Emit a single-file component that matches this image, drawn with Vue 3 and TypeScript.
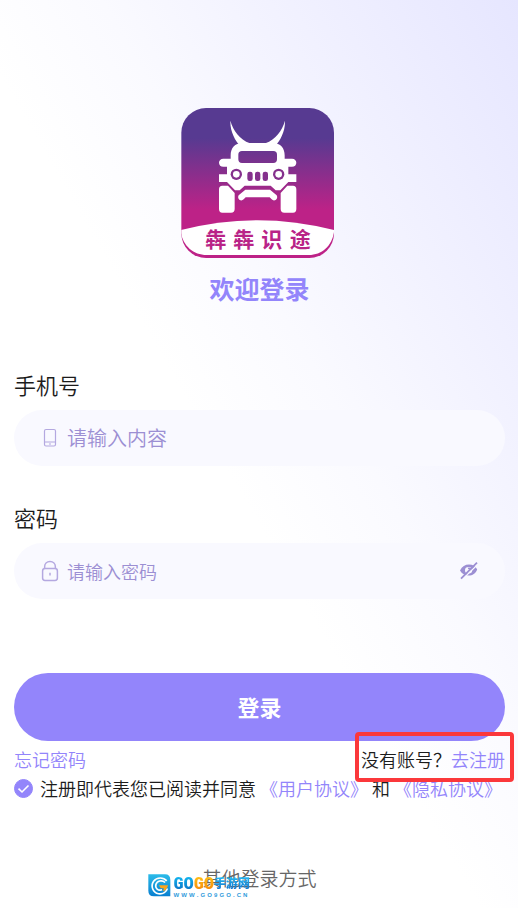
<script setup lang="ts">
import { ref } from 'vue'

const phone = ref('')
const password = ref('')
const showPassword = ref(false)
const agreed = ref(true)
</script>

<template>
  <main class="page">
    <svg class="logo" viewBox="33 30 471 450" role="img" aria-label="犇犇识途">
      <defs>
        <linearGradient id="logo-fill" x1="0" y1="0" x2="0" y2="1">
          <stop offset="0.2" stop-color="#573a91" />
          <stop offset="0.68" stop-color="#bd2287" />
        </linearGradient>
        <clipPath id="logo-shape"><rect x="34" y="30" width="458" height="450" rx="74" /></clipPath>
      </defs>
      <g clip-path="url(#logo-shape)">
        <rect x="33" y="30" width="459" height="450" fill="url(#logo-fill)" />
        <path d="M33 396Q262 337 492 396V402C486 444 455 471 416 471H110C70 471 40 444 33 405Z" fill="#fff" />
      </g>
      <g fill="#fff">
        <path d="M181 68C190 98 208 124 240 136H286C318 124 336 98 345 68C346 100 331 128 314 145H212C195 128 180 100 181 68Z" />
        <path fill-rule="evenodd" d="M217 135H309C332 135 344 151 344 172V182H366C374 182 379 188 379 194C379 201 374 206 366 206H355V229H379V252H355L331 277H317L302 263H224L209 277H195L171 252H147V229H171V206H160C152 206 147 201 147 194C147 188 152 182 160 182H182V172C182 151 194 135 217 135ZM216 159Q205 159 205 170V184Q205 195 216 195H310Q321 195 321 184V170Q321 159 310 159Z" />
        <path d="M157 263H174L194 285V333Q194 344 183 344H157Q147 344 147 333V274Q147 263 157 263ZM369 263H352L332 285V333Q332 344 343 344H369Q379 344 379 333V274Q379 263 369 263Z" />
        <path d="M226 275H300L320 292Q324 299 318 305Q311 310 305 304L299 298H227L221 304Q215 310 208 305Q202 299 206 292Z" />
      </g>
      <g fill="#85308d">
        <circle cx="199" cy="229" r="17" />
        <circle cx="326" cy="229" r="17" />
        <rect x="232" y="221" width="16" height="28" rx="7" />
        <rect x="255" y="221" width="16" height="28" rx="7" />
        <rect x="278" y="221" width="16" height="28" rx="7" />
      </g>
      <g fill="#fff">
        <circle cx="199" cy="229" r="10" />
        <circle cx="326" cy="229" r="10" />
      </g>
      <text class="logo-name" x="106 190 274 359" y="447">犇犇识途</text>
    </svg>

    <h1 class="title">欢迎登录</h1>

    <form class="form" @submit.prevent>
      <div class="field">
        <label class="label" for="phone">手机号</label>
        <div class="control">
          <svg class="icon" viewBox="0 0 20 22" aria-hidden="true">
            <rect x="4.5" y="2.5" width="11" height="16.5" rx="1.5" />
            <path d="M4.5 15H15.5M9 17H11" />
          </svg>
          <input id="phone" v-model="phone" class="input input-large" type="tel" placeholder="请输入内容" />
        </div>
      </div>

      <div class="field">
        <label class="label" for="password">密码</label>
        <div class="control">
          <svg class="icon icon-lock" viewBox="0 0 20 22" aria-hidden="true">
            <rect x="2.6" y="8.6" width="14.8" height="11.8" rx="2.4" />
            <path d="M4.6 8.6V7C4.6 3.8 6.8 1.6 10 1.6S15.4 3.8 15.4 7V8.6M10 12.8V15.6" />
          </svg>
          <input
            id="password"
            v-model="password"
            class="input"
            :type="showPassword ? 'text' : 'password'"
            placeholder="请输入密码"
          />
          <button class="toggle" type="button" aria-label="显示密码" @click="showPassword = !showPassword">
            <svg viewBox="0 0 20 20" aria-hidden="true">
              <path fill-rule="evenodd" d="M1 9.5C3 5.5 6.2 3.6 10 3.6S16.6 5.3 18.2 8.5C16.5 12.7 13.5 14.6 9.8 14.6S2.8 13 1 9.5ZM9.6 6A3.6 3.2 0 1 0 9.6 12.4A3.6 3.2 0 1 0 9.6 6Z" fill="#9c8fd3" />
              <path d="M9 7.5C11 6.800 12.300 8 12.200 9.5" fill="none" stroke="#9c8fd3" stroke-width="1.5" />
              <path d="M3.600 18L19.200 3" stroke="#f9f9ff" stroke-width="1.2" />
              <path d="M2 17.600L18 1.600" stroke="#9c8fd3" stroke-width="1.7" />
            </svg>
          </button>
        </div>
      </div>

      <button class="submit" type="submit">登录</button>

      <div class="links">
        <a href="#forgot">忘记密码</a>
        <p class="signup">没有账号？<a href="#register">去注册</a></p>
      </div>

      <div class="terms">
        <label class="agree">
          <span class="check">
            <input v-model="agreed" type="checkbox" />
            <svg v-if="agreed" viewBox="0 0 19 19" aria-hidden="true"><path d="M4.5 9.7L8 13L14.5 6.5" /></svg>
          </span>
          <span>注册即代表您已阅读并同意</span>
        </label>
        <a href="#agreement">《用户协议》</a>
        <span>和</span>
        <a href="#privacy">《隐私协议》</a>
      </div>
    </form>

    <footer class="other">
      <span class="other-text">
        其他登录方式
        <span class="mark">
          <svg class="mark-icon" viewBox="0 0 70 70" aria-hidden="true">
            <defs>
              <linearGradient id="mark-fill" x1="0" y1="0" x2="0" y2="1">
                <stop offset="0" stop-color="#2bbbe9" />
                <stop offset="1" stop-color="#087fd0" />
              </linearGradient>
            </defs>
            <path d="M1 1H52Q68 1 68 18V68H18Q1 68 1 51Z" fill="url(#mark-fill)" />
            <path d="M57 21C47 9 27 9 17 22C7 37 15 57 32 60C46 62 56 54 59 44" fill="none" stroke="#fff" stroke-width="5" />
            <path d="M52 26C43 17 27 20 24 32C21 44 31 52 43 48" fill="none" stroke="#fff" stroke-width="5" />
            <path d="M33 34H61C59 43 54 50 46 53L48 43H39Z" fill="#f9a51b" />
          </svg>
          <span class="mark-body">
            <span class="mark-name"><b class="mark-blue">GO</b><b class="mark-orange">GO</b><b class="mark-cn">手游网</b></span>
            <span class="mark-url"><i v-for="(c, i) in 'WWW.GO9GO.CN'" :key="i">{{ c }}</i></span>
          </span>
        </span>
      </span>
    </footer>
  </main>
</template>

<style>
body {
  margin: 0;
}
</style>

<style scoped>
.page {
  box-sizing: border-box;
  min-height: 100vh;
  padding: 108px 13px 15px 14px;
  display: flex;
  flex-direction: column;
  background: linear-gradient(240deg, #e6e6ff 0%, #f2f2ff 24%, #fafaff 40%, #ffffff 54%);
  color: #1c1c1c;
  font-family: "Noto Sans CJK SC", sans-serif;
  font-size: 18px;
  font-weight: 350;
  line-height: 20px;
}

.logo {
  width: 157px;
  height: 150px;
  align-self: center;
}

.logo-name {
  fill: #b92387;
  font-size: 63px;
  font-weight: 700;
}

.title {
  margin: 14px 0 66px;
  color: #9385fb;
  font-size: 25px;
  font-weight: 700;
  line-height: 32px;
  text-align: center;
}

.form {
  display: flex;
  flex-direction: column;
}

.field {
  display: flex;
  flex-direction: column;
  gap: 12px;
}

.field + .field {
  margin-top: 37px;
}

.label {
  font-size: 22px;
  line-height: 28px;
}

.control {
  display: flex;
  align-items: center;
  gap: 7px;
  height: 56px;
  padding: 0 26px;
  border-radius: 28px;
  background: #f9f9ff;
}

.icon {
  flex: none;
  width: 20px;
  height: 22px;
  fill: none;
  stroke: #b4a8e0;
  stroke-width: 1.2;
}

.icon-lock {
  stroke-width: 1.5;
}

.input {
  flex: 1;
  min-width: 0;
  padding: 0;
  border: 0;
  outline: 0;
  background: transparent;
  color: #1c1c1c;
  font-family: inherit;
  font-size: 18px;
  font-weight: inherit;
  line-height: 30px;
}

.input-large {
  font-size: 20px;
}

.input::placeholder {
  color: #9c8fd3;
  opacity: 1;
}

.toggle {
  flex: none;
  width: 20px;
  height: 20px;
  padding: 0;
  border: 0;
  background: transparent;
}

.toggle svg {
  display: block;
}

.submit {
  height: 68px;
  margin-top: 74px;
  padding: 0 0 2px;
  border: 0;
  border-radius: 34px;
  background: #9385fb;
  color: #fff;
  font-family: inherit;
  font-size: 22px;
  font-weight: 700;
}

a {
  color: #9385fb;
  text-decoration: none;
}

.links {
  display: flex;
  justify-content: space-between;
  line-height: 37px;
}

.signup {
  position: relative;
  margin: 0;
}

.signup::after {
  content: "";
  position: absolute;
  inset: -9px -9px -4px -6px;
  border: 4px solid #fb383b;
  border-radius: 4px;
  pointer-events: none;
}

.terms {
  display: flex;
  align-items: center;
  gap: 4px;
  white-space: nowrap;
}

.agree {
  display: flex;
  align-items: center;
  gap: 7px;
}

.check {
  display: grid;
  width: 19px;
  height: 19px;
}

.check input {
  grid-area: 1 / 1;
  width: 19px;
  height: 19px;
  margin: 0;
  border: 1px solid #9385fb;
  border-radius: 50%;
  appearance: none;
}

.check input:checked {
  background: #9385fb;
}

.check svg {
  grid-area: 1 / 1;
  fill: none;
  stroke: #fff;
  stroke-width: 1.6;
  pointer-events: none;
}

.other {
  margin-top: 66px;
  color: #666;
  font-size: 19px;
  line-height: 28px;
  text-align: center;
}

.other-text {
  position: relative;
  display: inline-block;
}

.mark {
  position: absolute;
  top: 10px;
  left: -54px;
  display: flex;
  gap: 2px;
}

.mark-icon {
  width: 23px;
  height: 23px;
}

.mark-body {
  display: flex;
  flex-direction: column;
  width: 74px;
}

.mark-name {
  display: flex;
  align-items: center;
  height: 18px;
  font-family: "Roboto Condensed", "Liberation Sans Narrow", "Roboto", sans-serif;
  font-size: 17px;
  line-height: 20px;
  white-space: nowrap;
}

.mark-name b {
  background-clip: text;
  color: transparent;
  font-weight: 900;
}

.mark-name .mark-blue {
  background-image: linear-gradient(#12b4ee 20%, #0c74c8 85%);
}

.mark-name .mark-orange {
  background-image: linear-gradient(#ffbe14 20%, #f68a0c 85%);
}

.mark-name .mark-cn {
  background-image: linear-gradient(#22b8f2 20%, #1272cc 85%);
  font-family: "Noto Sans CJK SC", sans-serif;
  font-size: 12px;
}

.mark-url {
  display: flex;
  justify-content: space-between;
  color: #2f9bdc;
  font-family: "Liberation Sans", sans-serif;
  font-size: 6px;
  font-weight: 700;
  line-height: 6px;
}

.mark-url i {
  font-style: normal;
}
</style>
